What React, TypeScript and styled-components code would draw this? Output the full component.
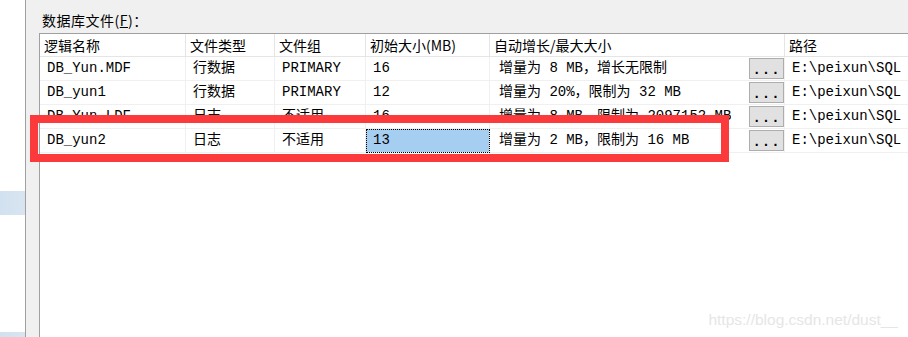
import * as React from 'react';
import styled, { createGlobalStyle } from 'styled-components';

const GlobalStyle = createGlobalStyle`
  html, body {
    margin: 0;
    padding: 0;
    background: #fff;
  }
  body {
    width: 908px;
    height: 337px;
    overflow: hidden;
    font-family: "Noto Sans CJK SC", sans-serif;
  }
`;

type Row = {
  name: string;
  type: string;
  group: string;
  size: string;
  growth: string;
  path: string;
};

const rows: Row[] = [
  { name: 'DB_Yun.MDF', type: '行数据', group: 'PRIMARY', size: '16', growth: '增量为 8 MB，增长无限制', path: 'E:\\peixun\\SQL Server\\DB_Yun.mdf' },
  { name: 'DB_yun1', type: '行数据', group: 'PRIMARY', size: '12', growth: '增量为 20%，限制为 32 MB', path: 'E:\\peixun\\SQL Server\\DB_yun1.ndf' },
  { name: 'DB_Yun.LDF', type: '日志', group: '不适用', size: '16', growth: '增量为 8 MB，限制为 2097152 MB', path: 'E:\\peixun\\SQL Server\\DB_Yun.ldf' },
  { name: 'DB_yun2', type: '日志', group: '不适用', size: '13', growth: '增量为 2 MB，限制为 16 MB', path: 'E:\\peixun\\SQL Server\\DB_yun2.ldf' },
];

const headers = ['逻辑名称', '文件类型', '文件组', '初始大小(MB)', '自动增长/最大大小', '路径'];

const App: React.FC = () => {
  return (
    <>
      <GlobalStyle />
      <Page>
        <Sidebar>
          <SideItem offset={191} />
          <SideItem offset={117} />
        </Sidebar>
        <Panel>
          <Label>
            数据库文件(<u>F</u>)：
          </Label>
          <GridBox>
            <Grid>
              {headers.map((h) => (
                <HeadCell key={h}>{h}</HeadCell>
              ))}
              {rows.map((r, i) => (
                <React.Fragment key={r.name}>
                  <Cell>{r.name}</Cell>
                  <Cell>{r.type}</Cell>
                  <Cell>{r.group}</Cell>
                  <Cell selected={i === 3}>{r.size}</Cell>
                  <GrowthCell>
                    <GrowthText>{r.growth}</GrowthText>
                    <EllipsisButton>...</EllipsisButton>
                  </GrowthCell>
                  <Cell>{r.path}</Cell>
                </React.Fragment>
              ))}
            </Grid>
          </GridBox>
        </Panel>
        <Highlight />
        <Watermark>https://blog.csdn.net/dust__</Watermark>
      </Page>
    </>
  );
};

export default App;

const Page = styled.div`
  position: relative;
  display: flex;
  width: 908px;
  height: 337px;
  overflow: hidden;
`;

const Sidebar = styled.div`
  display: flex;
  flex-direction: column;
  width: 25px;
  flex-shrink: 0;
  background: #fff;
  border-right: 1px solid #a0a0a0;
`;

const SideItem = styled.div<{ offset: number }>`
  margin-top: ${(p) => p.offset}px;
  height: 24px;
  background: linear-gradient(to right, #d2e1f0, #d8e5f1);
  flex-shrink: 0;
`;

const Panel = styled.div`
  flex: 1;
  display: flex;
  flex-direction: column;
  background: #f0f0f0;
  padding-left: 13px;
  min-width: 0;
`;

const Label = styled.div`
  height: 33px;
  box-sizing: border-box;
  padding: 10px 0 0 3px;
  font-size: 14px;
  line-height: 20px;
  color: #000;
  letter-spacing: 0.5px;
  white-space: nowrap;

  u {
    text-underline-offset: 1px;
  }
`;

const GridBox = styled.div`
  flex: 1;
  background: #fff;
  border-top: 1px solid #a0a0a0;
  border-left: 1px solid #a0a0a0;
  overflow: hidden;
`;

const Grid = styled.div`
  display: grid;
  grid-template-columns: 146px 89px 91px 124px 295px 320px;
  grid-template-rows: 23px repeat(4, 24px);
  width: max-content;
`;

const HeadCell = styled.div`
  box-sizing: border-box;
  padding: 0 0 0 4px;
  border-right: 1px solid #e5e5e5;
  border-bottom: 1px solid #e5e5e5;
  font-family: "Noto Sans CJK SC", sans-serif;
  font-size: 14px;
  line-height: 22px;
  color: #000;
  white-space: nowrap;
  overflow: hidden;
`;

const Cell = styled.div<{ selected?: boolean }>`
  box-sizing: border-box;
  padding: 0 0 0 7px;
  border-right: 1px solid #f0f0f0;
  border-bottom: 1px solid #f0f0f0;
  font-family: "Liberation Mono", "Noto Sans CJK SC", monospace;
  font-size: 14px;
  line-height: 23px;
  color: #000;
  white-space: nowrap;
  overflow: hidden;
  background: ${(p) => (p.selected ? '#a6cef0' : 'transparent')};
  outline: ${(p) => (p.selected ? '1px dotted #000' : 'none')};
  outline-offset: -1px;
`;

const GrowthCell = styled(Cell)`
  display: flex;
  align-items: center;
  justify-content: space-between;
  padding-left: 9px;
  padding-right: 0;
`;

const GrowthText = styled.span`
  overflow: hidden;
  white-space: nowrap;
`;

const EllipsisButton = styled.button`
  box-sizing: border-box;
  width: 35px;
  height: 21px;
  margin-right: 0;
  padding: 3px 0 0;
  border: 1px solid #adadad;
  border-radius: 0;
  background: #e1e1e1;
  font-family: "Liberation Mono", monospace;
  font-size: 14px;
  font-weight: bold;
  line-height: 16px;
  letter-spacing: 1px;
  color: #000;
  flex-shrink: 0;
`;

const Highlight = styled.div`
  position: absolute;
  left: 30px;
  top: 115px;
  width: 699px;
  height: 47px;
  box-sizing: border-box;
  border: 8px solid #fc3a3c;
  pointer-events: none;
`;

const Watermark = styled.div`
  position: absolute;
  right: 10px;
  bottom: 8px;
  font-family: "Liberation Sans", Arial, sans-serif;
  font-size: 15.5px;
  color: #e6e6e6;
`;
